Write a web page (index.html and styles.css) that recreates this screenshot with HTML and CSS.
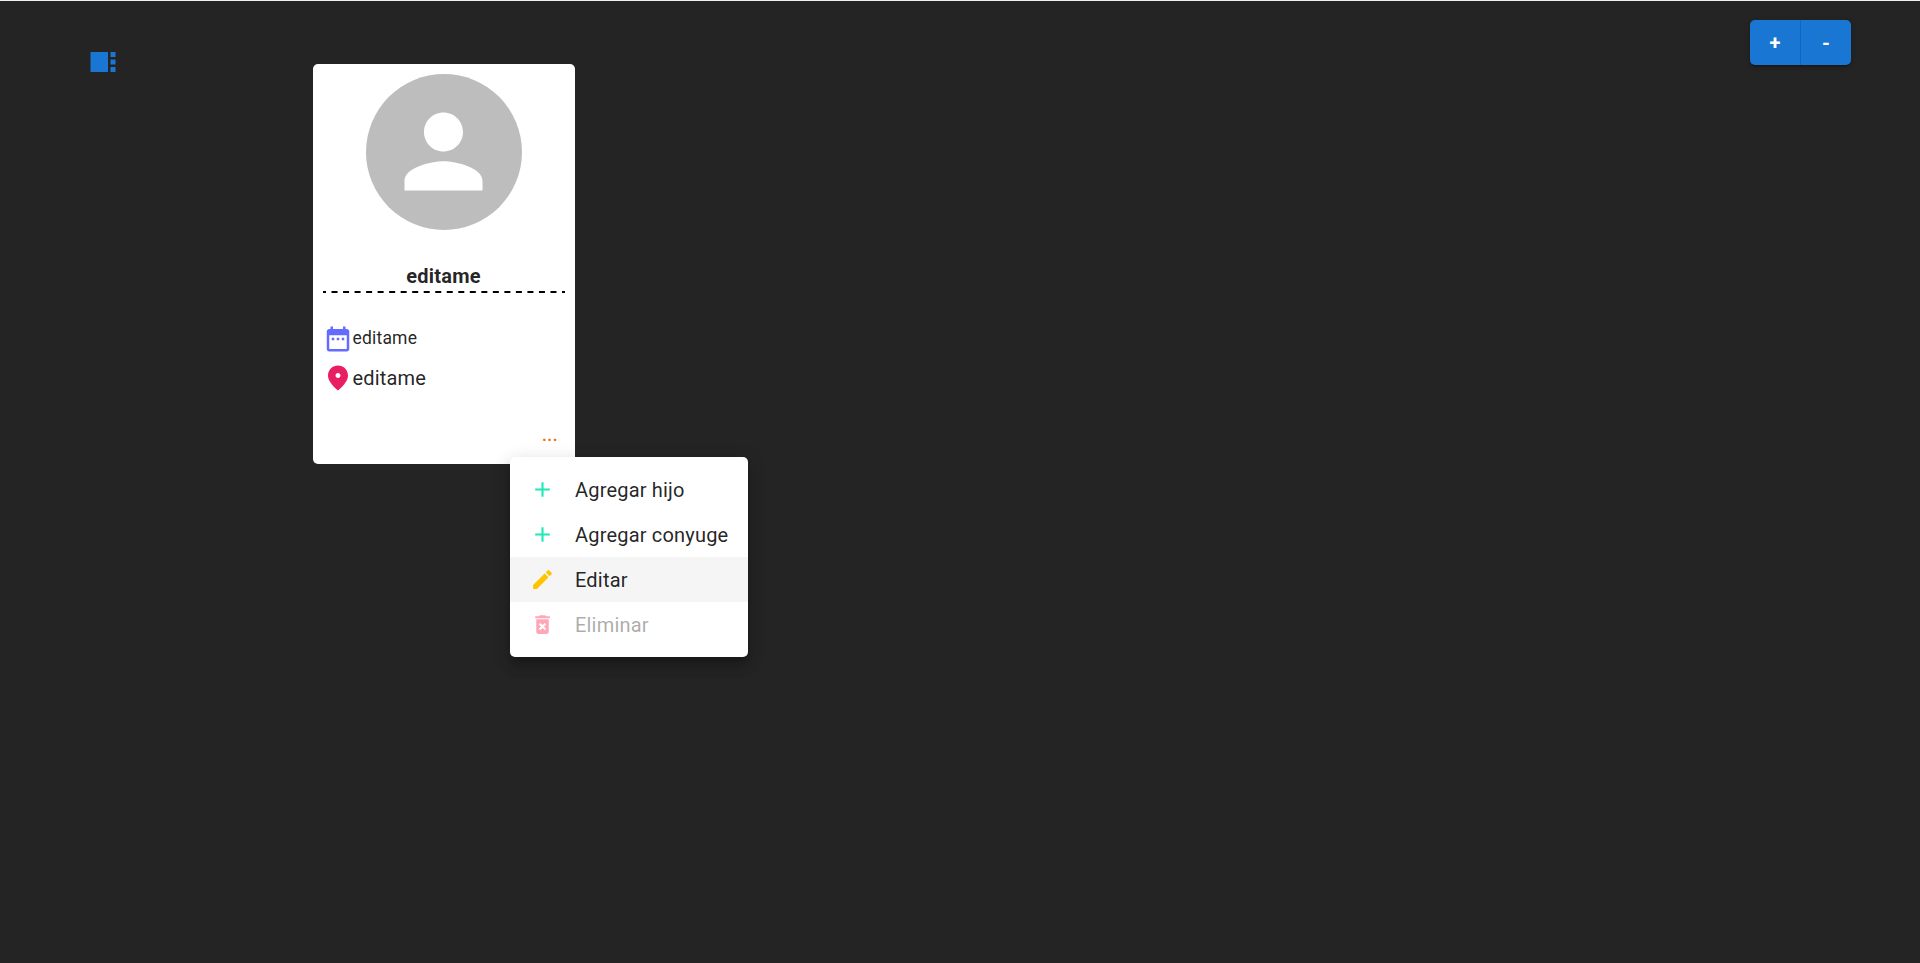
FILE: index.html
```html
<!DOCTYPE html>
<html lang="es">
<head>
<meta charset="utf-8">
<title>Árbol genealógico</title>
<link rel="stylesheet" href="styles.css">
</head>
<body>
<main class="canvas">
  <button class="panel-toggle" aria-label="Panel">
    <svg class="icon" viewBox="0 0 24 24"><path d="M16 20H2V4h14v16zm2-12h4V4h-4v4zm0 12h4v-4h-4v4zm0-6h4v-4h-4v4z"/></svg>
  </button>
  <div class="node">
    <article class="card">
      <div class="avatar"><svg viewBox="0 0 24 24"><path d="M12 12c2.21 0 4-1.79 4-4s-1.79-4-4-4-4 1.79-4 4 1.79 4 4 4zm0 2c-2.67 0-8 1.34-8 4v2h16v-2c0-2.66-5.33-4-8-4z"/></svg></div>
      <h2 class="name">editame</h2>
      <svg class="divider" viewBox="0 0 242 2"><path d="M0 1h242"/></svg>
      <div class="row row-date">
        <svg class="icon" viewBox="0 0 24 24"><path d="M9 11H7v2h2v-2zm4 0h-2v2h2v-2zm4 0h-2v2h2v-2zm2-7h-1V2h-2v2H8V2H6v2H5c-1.11 0-1.99.9-1.99 2L3 20c0 1.1.89 2 2 2h14c1.1 0 2-.9 2-2V6c0-1.1-.9-2-2-2zm0 16H5V9h14v11z"/></svg>
        <span>editame</span>
      </div>
      <div class="row row-place">
        <svg class="icon" viewBox="0 0 24 24"><path d="M12 2c-4.2 0-8 3.22-8 8.2 0 3.32 2.67 7.25 8 11.8 5.33-4.55 8-8.48 8-11.8C20 5.22 16.2 2 12 2zm0 10c-1.1 0-2-.9-2-2s.9-2 2-2 2 .9 2 2-.9 2-2 2z"/></svg>
        <span>editame</span>
      </div>
      <button class="more">...</button>
    </article>
    <ul class="menu">
      <li class="item add"><svg viewBox="0 0 24 24"><path d="M19 13h-6v6h-2v-6H5v-2h6V5h2v6h6v2z"/></svg><span>Agregar hijo</span></li>
      <li class="item add"><svg viewBox="0 0 24 24"><path d="M19 13h-6v6h-2v-6H5v-2h6V5h2v6h6v2z"/></svg><span>Agregar conyuge</span></li>
      <li class="item edit"><svg viewBox="0 0 24 24"><path d="M3 17.25V21h3.75L17.81 9.94l-3.75-3.75L3 17.25zM20.71 7.04c.39-.39.39-1.02 0-1.41l-2.34-2.34c-.39-.39-1.02-.39-1.41 0l-1.83 1.83 3.75 3.75 1.83-1.83z"/></svg><span>Editar</span></li>
      <li class="item remove"><svg viewBox="0 0 24 24"><path d="M6 19c0 1.1.9 2 2 2h8c1.1 0 2-.9 2-2V7H6v12zm2.46-7.12 1.41-1.41L12 12.59l2.12-2.12 1.41 1.41L13.41 14l2.12 2.12-1.41 1.41L12 15.41l-2.12 2.12-1.41-1.41L10.59 14l-2.13-2.12zM15.5 4l-1-1h-5l-1 1H5v2h14V4z"/></svg><span>Eliminar</span></li>
    </ul>
  </div>
  <div class="zoom">
    <button class="zoom-btn zoom-in">+</button>
    <button class="zoom-btn">-</button>
  </div>
</main>
</body>
</html>
```
FILE: styles.css
```css
* { box-sizing: border-box; }

body {
  margin: 0;
  font-family: Roboto, "Liberation Sans", sans-serif;
  color: rgba(0, 0, 0, 0.87);
}

button {
  padding: 0;
  border: 0;
  background: none;
  font: inherit;
}

svg { display: block; fill: currentColor; }

.canvas {
  display: flex;
  align-items: flex-start;
  height: 963px;
  padding: 19px 69px 0 88px;
  border-top: 1px solid #eef1ee;
  background: #242424;
  overflow: hidden;
}

.icon { width: 30px; height: 30px; flex: none; }

.panel-toggle { margin-top: 27px; color: #1976d2; }

.node {
  position: relative;
  margin: 44px auto 0 195px;
}

.card {
  display: flex;
  flex-direction: column;
  width: 262px;
  height: 400px;
  padding: 10px;
  border-radius: 5px;
  background: #fff;
}

.avatar {
  display: flex;
  align-items: center;
  justify-content: center;
  align-self: center;
  width: 156px;
  height: 156px;
  padding: 0 1px 1px 0;
  border-radius: 50%;
  background: #bdbdbd;
  color: #fff;
}

.avatar svg { width: 117px; height: 117px; }

.name {
  margin: 31px 0 0;
  padding-right: 1px;
  font-size: 20px;
  font-weight: 700;
  line-height: 30px;
  letter-spacing: 0.19px;
  text-align: center;
}

.divider {
  width: 242px;
  height: 2px;
  margin-bottom: 31px;
}

.divider path {
  stroke: #000;
  stroke-width: 2;
  stroke-dasharray: 6 5.524;
  stroke-dashoffset: 3;
}

.row {
  display: flex;
  align-items: center;
  height: 30px;
}

.row span { margin-left: -0.5px; }

.row-date { font-size: 17.5px; letter-spacing: 0.19px; }
.row-date span { padding-bottom: 2px; }
.row-date .icon { color: #646cff; }

.row-place {
  margin-top: 9px;
  font-size: 20px;
  letter-spacing: 0.19px;
}
.row-place .icon { color: #e91e63; }

.more {
  align-self: flex-end;
  width: 30px;
  margin: 32px 0 0;
  color: #ed6c02;
  font-size: 17.5px;
  font-weight: 500;
  line-height: 20px;
  letter-spacing: 0.5px;
}

.menu {
  position: absolute;
  top: 393px;
  left: 197px;
  width: 238px;
  margin: 0;
  padding: 10px 0;
  border-radius: 5px;
  background: #fff;
  list-style: none;
  box-shadow: 0 6px 6px -4px rgba(0, 0, 0, 0.2), 0 10px 12px 1px rgba(0, 0, 0, 0.14), 0 4px 18px 2px rgba(0, 0, 0, 0.12);
}

.item {
  display: flex;
  align-items: center;
  gap: 20px;
  height: 45px;
  padding: 0 20px;
  font-size: 20px;
  letter-spacing: 0.19px;
  white-space: nowrap;
}

.item svg { width: 25px; height: 25px; flex: none; }

.add svg { color: #1de9b6; }
.edit { background: #f5f5f5; }
.edit svg { color: #ffc400; }
.remove { opacity: 0.38; }
.remove svg { color: #ff1744; }

.zoom {
  display: flex;
  border-radius: 5px;
  background: #1976d2;
  box-shadow: 0 4px 1px -3px rgba(0, 0, 0, 0.2), 0 2px 2px rgba(0, 0, 0, 0.14), 0 1px 6px rgba(0, 0, 0, 0.12);
}

.zoom-btn {
  width: 50px;
  height: 45px;
  color: #fff;
  font-size: 20px;
  font-weight: 700;
}

.zoom-in { width: 51px; border-right: 1px solid #1565c0; }
```
